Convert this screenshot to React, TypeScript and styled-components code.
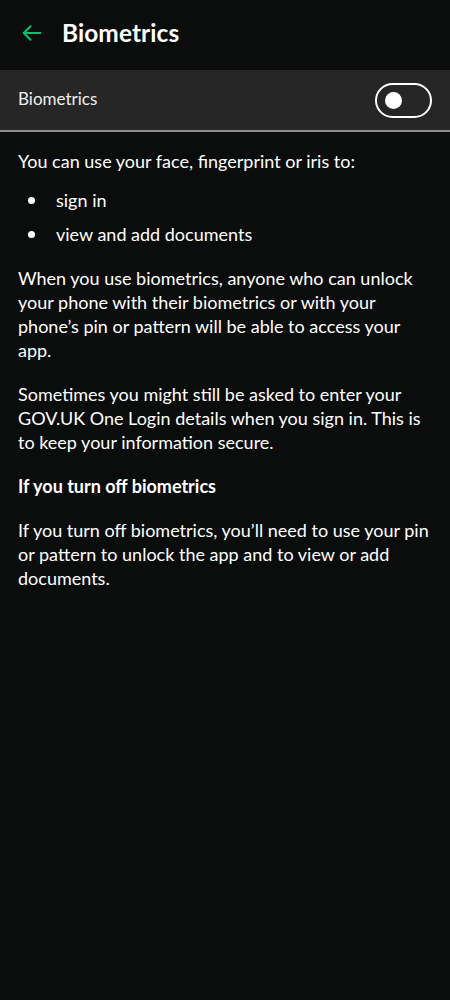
import React from "react";
import styled, { createGlobalStyle } from "styled-components";

const Global = createGlobalStyle`
  html, body { margin: 0; padding: 0; background: #0b0c0c; }
  body { font-family: Lato, "Noto Sans", sans-serif; color: #ffffff; }
  * { box-sizing: border-box; }
`;

const Page = styled.div`
  width: 450px;
  min-height: 1000px;
  background: #0b0c0c;
  display: flex;
  flex-direction: column;
`;

const Header = styled.header`
  height: 70px;
  display: flex;
  align-items: center;
  padding: 0 0 5px 21px;
  gap: 21px;
`;

const BackButton = styled.button`
  background: none;
  border: none;
  padding: 0;
  width: 20px;
  height: 20px;
  display: flex;
  align-items: center;
  justify-content: center;
  color: #00c46c;
  cursor: pointer;
`;

const Title = styled.h1`
  margin: 0;
  font-size: 24.4px;
  font-weight: 700;
  letter-spacing: 0.1px;
  color: #ffffff;
`;

const ToggleRow = styled.div`
  height: 62px;
  background: #262626;
  border-bottom: 2px solid #8e8e8e;
  display: flex;
  align-items: center;
  justify-content: space-between;
  padding: 0 18px 0 18px;
`;

const RowLabel = styled.span`
  font-size: 17px;
  color: #eeeeee;
  margin-bottom: 3px;
`;

const Switch = styled.div<{ $on: boolean }>`
  width: 57px;
  height: 35px;
  border: 2.5px solid #ffffff;
  border-radius: 18px;
  display: flex;
  align-items: center;
  padding: 0 8px;
  justify-content: ${(p) => (p.$on ? "flex-end" : "flex-start")};
`;

const Knob = styled.div`
  width: 17px;
  height: 17px;
  border-radius: 50%;
  background: #ffffff;
`;

const Content = styled.main`
  padding: 17px 18px 0 18px;
  display: flex;
  flex-direction: column;
  gap: 20px;
`;

const Para = styled.p`
  margin: 0;
  font-size: 18px;
  line-height: 24px;
`;

const List = styled.ul`
  margin: -5px 0 0 0;
  padding: 0;
  list-style: none;
  display: flex;
  flex-direction: column;
  gap: 10px;
`;

const Item = styled.li`
  font-size: 18px;
  line-height: 24px;
  display: flex;
  align-items: center;
  gap: 21px;
  &::before {
    content: "";
    width: 7px;
    height: 7px;
    border-radius: 50%;
    background: #ffffff;
    margin-left: 10px;
  }
`;

const Heading = styled.h2`
  margin: 0;
  font-size: 18px;
  line-height: 24px;
  font-weight: 700;
`;

export default function App() {
  return (
    <>
      <Global />
      <Page>
        <Header>
          <BackButton aria-label="Back">
            <svg width="19" height="16" viewBox="0 0 19 16" fill="none">
              <path d="M18.5 8H2M8.5 1.2L1.7 8l6.8 6.8" stroke="currentColor" strokeWidth="2" strokeLinecap="round" strokeLinejoin="round" />
            </svg>
          </BackButton>
          <Title>Biometrics</Title>
        </Header>
        <ToggleRow>
          <RowLabel>Biometrics</RowLabel>
          <Switch $on={false}>
            <Knob />
          </Switch>
        </ToggleRow>
        <Content>
          <Para>You can use your face, fingerprint or iris to:</Para>
          <List>
            <Item>sign in</Item>
            <Item>view and add documents</Item>
          </List>
          <Para>
            When you use biometrics, anyone who can unlock your phone with their biometrics or with your phone’s pin or
            pattern will be able to access your app.
          </Para>
          <Para>
            Sometimes you might still be asked to enter your GOV.UK One Login details when you sign in. This is to keep
            your information secure.
          </Para>
          <Heading>If you turn off biometrics</Heading>
          <Para>
            If you turn off biometrics, you’ll need to use your pin or pattern to unlock the app and to view or add
            documents.
          </Para>
        </Content>
      </Page>
    </>
  );
}
